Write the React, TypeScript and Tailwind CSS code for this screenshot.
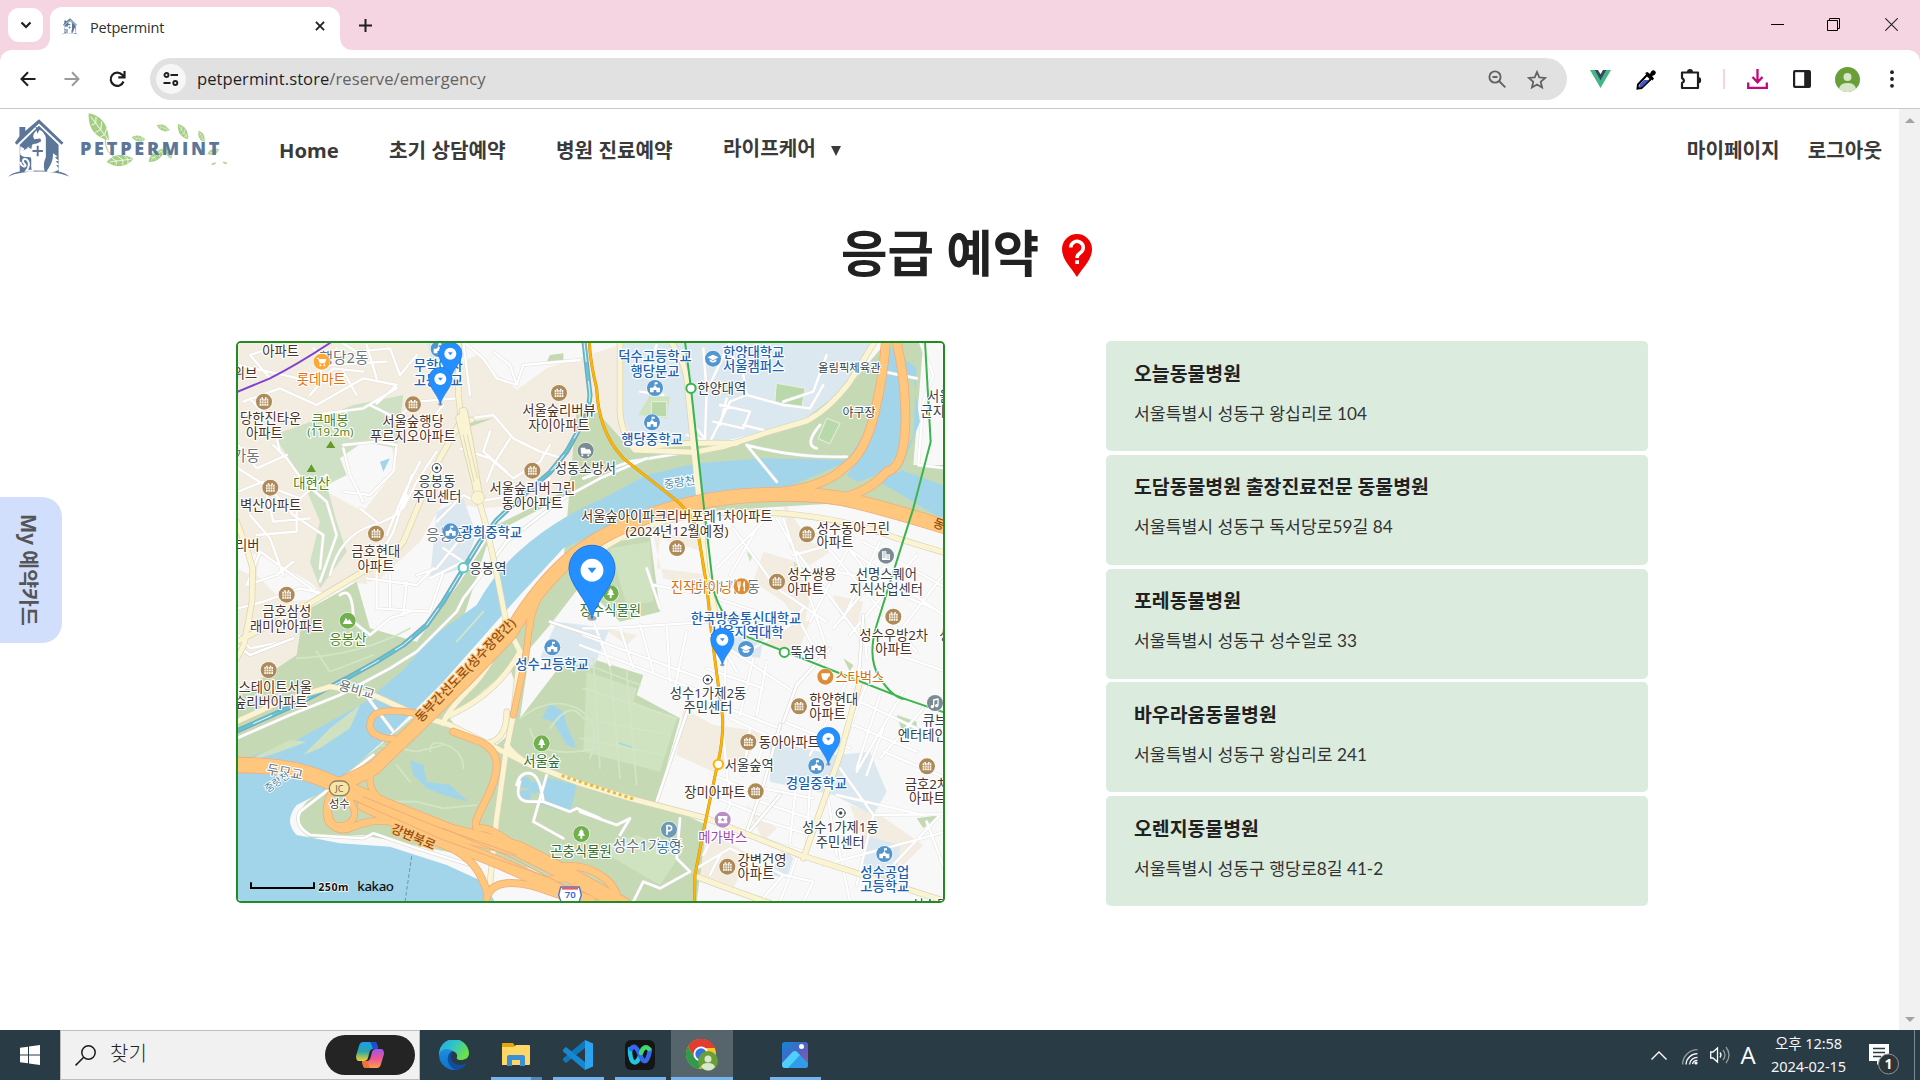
import React from "react";

const KR = "font-['Noto_Sans','Noto_Sans_CJK_KR',sans-serif]";
const LATO = "font-['Lato','Noto_Sans_CJK_KR',sans-serif]";
const UI = "font-['Open_Sans','Noto_Sans_CJK_KR',sans-serif]";

/* ---------- logos ---------- */

function House({ className }: { className: string }) {
  return (
    <svg className={className} viewBox="0 0 190 180" fill="none">
      <path d="M35 54V26h18v12L95 2l75 72-6 6L95 15 27 80l-6-6z" fill="#5b7699" />
      <path d="M95 22 155 80v82c12 2 22 6 33 16-42-20-142-22-188 0 10-9 22-14 36-16V80z" fill="#5b7699" />
      <path d="M38 84l8 6q10 2 18-4l14-8q12 0 22-8l-6 14q0 14-6 20H74q-20 4-28-8-8 6-10 20z" fill="#fff" opacity=".95" />
      <path d="M90 32c-4 8-12 12-13 22l3 9 18-2c6 6 4 10-3 14-10 2-16 8-22 18-10 8-22 8-30 2l-5 4v12c8 8 20 8 32 8 4 12-2 28 4 40l38 1c-4-16-2-30 4-42V58c-4-14-12-22-26-26z" fill="#fff" />
      <path d="M84 24l6 22 8-14zM45 78l5 18 10-6zM74 74l-2 18-9-3z" fill="#5b7699" />
      <path d="M60 96c4 16 20 14 22 32s-10 30-4 32H56c6-8 12-22 4-32-4-6-14-6-14 2s8 8 8 14-16 2-16-12" stroke="#fff" strokeWidth="6" />
      <path d="M118 162c10-16 20-28 20-56l14 10-8 2 12 12-10 0 12 12-10 0 8 12c-6 8-20 12-38 8z" fill="#fff" />
      <path d="M91 83v32M75 99h32" stroke="#5b7699" strokeWidth="6" />
    </svg>
  );
}

function Leaf({ t, s = 1 }: { t: string; s?: number }) {
  return (
    <g transform={`${t} scale(${s})`}>
      <path d="M0 0C26 8 42 26 40 66 12 60-6 36 0 0z" fill="#a5cf85" />
      <path d="M4 8 38 64M14 24l-10 4M14 24l2-14M24 40 10 46M24 40l4-18M32 52l-12 6M32 52l6-14" stroke="#fff" strokeWidth="2" fill="none" />
    </g>
  );
}

function BrandLeaves() {
  return (
    <svg className="absolute left-[82px] top-[2px] h-[60px] w-[150px]" viewBox="246 333 450 180">
      <Leaf t="translate(266 340) rotate(-6)" s={1.3} />
      <Leaf t="translate(320 486) rotate(-66)" s={1.05} />
      <Leaf t="translate(395 412) rotate(-50)" s={0.55} />
      <Leaf t="translate(470 376) rotate(-38)" s={0.55} />
      <Leaf t="translate(534 372) rotate(-3)" s={0.72} />
      <Leaf t="translate(596 392) rotate(4)" s={0.5} />
      <Leaf t="translate(446 486) rotate(-100)" s={0.8} />
      <Leaf t="translate(500 440) rotate(10)" s={0.5} />
      <Leaf t="translate(622 462) rotate(-80)" s={0.5} />
      <Leaf t="translate(634 494) rotate(-80)" s={0.2} />
      <Leaf t="translate(668 486) rotate(-40)" s={0.2} />
      <path d="M315 415q0 50 40 60M470 430q-8 10-8 26" stroke="#a5cf85" strokeWidth="3" fill="none" />
    </svg>
  );
}

/* ---------- browser chrome ---------- */

function TabStrip() {
  return (
    <div className="flex h-[50px] shrink-0 bg-[#f6d5e3]">
      <div className="ml-2 mt-2 flex h-[34px] w-[35px] items-center justify-center rounded-[11px] bg-white">
        <svg width="12" height="8" viewBox="0 0 12 8" fill="none" stroke="#1f1f1f" strokeWidth="2.2">
          <path d="M1.5 1.5 6 6l4.500-4.500" />
        </svg>
      </div>
      <div className="relative ml-[7px] mt-[7px] flex h-[43px] w-[290px] items-center rounded-t-[12px] bg-white pl-[11px]">
        <svg className="absolute -left-[14px] bottom-0" width="14" height="14" viewBox="0 0 14 14">
          <path d="M14 0v14H0Q14 14 14 0z" fill="#fff" />
        </svg>
        <svg className="absolute -right-[14px] bottom-0" width="14" height="14" viewBox="0 0 14 14">
          <path d="M0 0v14h14Q0 14 0 0z" fill="#fff" />
        </svg>
        <House className="mb-[5px] h-[17px] w-[18px]" />
        <span className={`ml-[11px] text-[14.500px] text-[#303030] ${UI} mt-[-2px] tracking-[-0.2px]`}>Petpermint</span>
        <svg className="ml-auto mb-[6px] mr-[15px]" width="10" height="10" viewBox="0 0 11 11" stroke="#1f1f1f" strokeWidth="2">
          <path d="M1 1l9 9M10 1l-9 9" />
        </svg>
      </div>
      <svg className="ml-[19px] mt-[19px]" width="13" height="13" viewBox="0 0 13 13" stroke="#1f1f1f" strokeWidth="2">
        <path d="M6.500 0v13M0 6.500h13" />
      </svg>
      <div className="ml-auto flex items-start pr-[22px] pt-[18px]">
        <svg width="13" height="13" viewBox="0 0 13 13" stroke="#000">
          <path d="M0 6.500h13" />
        </svg>
        <svg className="ml-[43px]" width="13" height="13" viewBox="0 0 13 13" stroke="#000" fill="none">
          <path d="M.5 2.500h10v10H.5zM2.500 2.500v-2h10v10h-2" />
        </svg>
        <svg className="ml-[45px]" width="13" height="13" viewBox="0 0 13 13" stroke="#222" strokeWidth="1.100">
          <path d="M.3.3l12.400 12.400M12.700.3L.3 12.700" />
        </svg>
      </div>
    </div>
  );
}

function Toolbar() {
  return (
    <div className="bg-[#f6d5e3]">
      <div className="flex h-[59px] items-center rounded-t-[12px] border-b border-[#c9c9c9] bg-white pl-5 pr-[26px]">
        <svg width="16" height="16" viewBox="0 0 16 16" fill="none" stroke="#1f1f1f" strokeWidth="2">
          <path d="M15.500 8H1.800M8 1.300 1.500 8 8 14.700" />
        </svg>
        <svg className="ml-[28px]" width="16" height="16" viewBox="0 0 16 16" fill="none" stroke="#9a9a9a" strokeWidth="2">
          <path d="M.5 8h13.700M8 1.300 14.500 8 8 14.700" />
        </svg>
        <svg className="ml-[29px]" width="17" height="17" viewBox="0 0 17 17" fill="none" stroke="#1f1f1f" strokeWidth="2.200">
          <path d="M14.500 10.500A6.600 6.600 0 1 1 13.200 3.800L15 5.800M15.500 0v6.300H9.300" />
        </svg>
        <div className="ml-[24px] flex h-[42px] w-[1417px] items-center rounded-full bg-[#e1e1e1] pl-[6px] pr-[20px]">
          <div className="flex size-[30px] items-center justify-center rounded-full bg-[#f6f6f6]">
            <svg width="16" height="14" viewBox="0 0 16 14" fill="none" stroke="#1f1f1f" strokeWidth="1.900">
              <circle cx="3.500" cy="3" r="2" />
              <path d="M7.500 3H15M.5 11h7" />
              <circle cx="12.300" cy="11" r="2" />
            </svg>
          </div>
          <span className={`ml-[11px] mt-px text-[16.600px] tracking-[0.05px] text-[#1f1f1f] ${UI}`}>
            petpermint.store<span className="text-[#636363]">/reserve/emergency</span>
          </span>
          <svg className="ml-auto" width="18" height="18" viewBox="0 0 18 18" fill="none" stroke="#636363" strokeWidth="1.900">
            <circle cx="7" cy="7" r="5.600" />
            <path d="M11 11l6.300 6.300M4.500 7h5" />
          </svg>
          <svg className="ml-[21px]" width="20" height="19" viewBox="0 0 20 19" fill="none" stroke="#636363" strokeWidth="1.800">
            <path d="M10 2l2.300 5.400 5.900.5-4.500 3.900 1.400 5.700L10 14.500l-5.100 3 1.400-5.700L1.800 7.900l5.900-.5z" />
          </svg>
        </div>
        <svg className="ml-[23px]" width="21" height="18" viewBox="0 0 21 18">
          <path d="M0 0h4.500l6 10 6-10H21L10.500 18z" fill="#41b883" />
          <path d="M4.500 0H8l2.500 4.300L13 0h3.500l-6 10.400z" fill="#34495e" />
        </svg>
        <svg className="ml-[25px]" width="20" height="21" viewBox="0 0 20 21">
          <path d="M1.500 19.500l.5-4L11 6l4 4-9.500 9z" fill="#fff" stroke="#000" strokeWidth="2" />
          <path d="M3 18l1-3 4-4h5l-7 7z" fill="#4257c9" />
          <path d="M9 4l2.500-1L14 5c1-3 3-5 5-3s0 4-3 5l2 2.500-1.500 2z" fill="#000" />
        </svg>
        <svg className="ml-[24px]" width="22" height="21" viewBox="0 0 22 21" fill="none">
          <path d="M2 3.500h16V19H2v-5q4-2 0-5z" stroke="#1f1f1f" strokeWidth="2.200" strokeLinejoin="round" />
          <path d="M7 3a3 3 0 0 1 6 0zM18 8a3.200 3.200 0 0 1 0 6.400z" fill="#1f1f1f" />
        </svg>
        <div className="ml-[21px] h-5 w-[2px] bg-[#f6d5e3]" />
        <svg className="ml-[22px]" width="21" height="20" viewBox="0 0 21 20" fill="none" stroke="#c2087c" strokeWidth="2.300">
          <path d="M10.500 0v13M5.500 8l5 5.300 5-5.300M1.200 13.500v5.300h18.600v-5.300" />
        </svg>
        <svg className="ml-[25px]" width="18" height="18" viewBox="0 0 18 18">
          <rect width="18" height="18" rx="2" fill="#1f2023" />
          <path d="M2.200 2.200h9v13.600h-9z" fill="#fff" />
        </svg>
        <svg className="ml-[24px]" width="25" height="25" viewBox="0 0 25 25">
          <circle cx="12.500" cy="12.500" r="12.500" fill="#689f38" />
          <circle cx="12.500" cy="10" r="4" fill="#d7e5c8" />
          <path d="M4 21.700Q5 16 12.500 16T21 21.700a12.500 12.500 0 0 1-17 0z" fill="#d7e5c8" />
        </svg>
        <svg className="ml-auto" width="4" height="18" viewBox="0 0 4 18" fill="#1f1f1f">
          <circle cx="2" cy="2.200" r="1.900" />
          <circle cx="2" cy="9" r="1.900" />
          <circle cx="2" cy="15.800" r="1.900" />
        </svg>
      </div>
    </div>
  );
}

/* ---------- map ---------- */

type Kind = "apt" | "school" | "univ" | "tree" | "mart" | "office" | "food" | "cafe" | "park" | "movie" | "fire" | "music" | "biz" | "mt";

const kindColor: Record<Kind, string> = {
  apt: "#ae8a58", school: "#5295d0", univ: "#5295d0", tree: "#72b04f", mart: "#ffa733", office: "#fff",
  food: "#dd8d36", cafe: "#dd8d36", park: "#6b99b6", movie: "#b98cc4", fire: "#7b8b94", music: "#7b8b94", biz: "#7b8b94", mt: "#72b04f",
};

function Poi({ k, x, y }: { k: Kind; x: number; y: number }) {
  if (k === "office")
    return (
      <g transform={`translate(${x} ${y})`} fill="#fff">
        <circle r="19" />
        <circle r="13.500" stroke="#37474f" strokeWidth="3" />
        <circle r="5" fill="#37474f" />
      </g>
    );
  return (
    <g transform={`translate(${x} ${y})`}>
      <circle r="26" fill="#fff" opacity=".7" />
      <circle r="24" fill={kindColor[k]} />
      {k === "apt" && (
        <g>
          <path d="M-13-9h5v-4h5v4h6v-4h5v4h5v21h-26z" fill="#fff" />
          <path d="M-7-8v20M0-8v20M7-8v20M-13-2h26M-13 5h26" stroke="#ae8a58" strokeWidth="2" />
        </g>
      )}
      {k === "school" && <path d="M-1-17h9v6H1v4l6 6h8v14H4V6h-8v7h-11V-1h8l6-6z" fill="#fff" />}
      {k === "univ" && <path d="M0-12 17-4 0 5-17-4zM-10 2v6Q0 15 10 8V2L0 7z" fill="#fff" />}
      {k === "tree" && <path d="M0-15 8-5H5l6 10H3v9h-6V5h-8l6-10h-3z" fill="#fff" />}
      {k === "mt" && <path d="M-15 10-5-9 1 1l4-6 10 15z" fill="#fff" />}
      {k === "mart" && (
        <g fill="#fff">
          <path d="M-15-12h6l2 4h21L10 5H-6l-5-14h-4z" />
          <circle cx="-4" cy="11" r="3" />
          <circle cx="8" cy="11" r="3" />
        </g>
      )}
      {k === "food" && <path d="M-11-13v10q3 5 3 16M-5-13v10q-3 5-3 16M8 13V-13q-5 8 0 15" stroke="#fff" strokeWidth="4" fill="none" />}
      {k === "cafe" && <path d="M-12-10H14v5q0 6-5 6-2 10-10 10-11 0-11-21z" fill="#fff" />}
      {k === "park" && <path d="M-6 14V-12H3a8 8 0 0 1 0 15H-6" stroke="#fff" strokeWidth="5" fill="none" />}
      {k === "movie" && <path d="M-14-11h28v7q-4 4 0 8v7h-28V4q4-4 0-8zM0-7l-2 5h-5l4 3-1 5 4-3 4 3-1-5 4-3H2z" fill="#fff" fillRule="evenodd" />}
      {k === "fire" && <path d="M-15-9h14v5h14v4h3v9h-30zM-10 11a3 3 0 1 0 .1 0M8 11a3 3 0 1 0 .1 0" fill="#fff" />}
      {k === "music" && <path d="M-4 9V-9l13-3V6" stroke="#fff" strokeWidth="4" fill="none" />}
      {k === "music" && <path d="M-8 6a5 5 0 1 0 .1 0M5 3a5 5 0 1 0 .1 0" fill="#fff" />}
      {k === "biz" && <path d="M-12 13v-26h13v9h11v17z" fill="#fff" />}
      {k === "biz" && <path d="M-9-8h7M-9-2h7M-9 4h7M3 1h6M3 7h6" stroke="#7b8b94" strokeWidth="2" />}
    </g>
  );
}

const pois: [Kind, number, number][] = [
  ["mart", 275, 80], ["apt", 102, 200], ["apt", 549, 208], ["apt", 987, 174], ["school", 626, 42], ["office", 620, 399],
  ["fire", 1067, 347], ["apt", 907, 407], ["apt", 121, 458], ["school", 662, 589], ["apt", 438, 596], ["apt", 170, 779], ["mt", 353, 857],
  ["univ", 1449, 71], ["school", 1275, 159], ["school", 1266, 262], ["apt", 1341, 639], ["apt", 1731, 598], ["apt", 1641, 740],
  ["biz", 1968, 662], ["food", 1535, 754], ["tree", 1142, 775], ["apt", 1990, 845], ["apt", 116, 1005], ["school", 967, 937],
  ["tree", 935, 1225], ["tree", 1054, 1497], ["univ", 1548, 942], ["office", 1433, 1034], ["cafe", 1786, 1025], ["apt", 1707, 1114],
  ["music", 2115, 1104], ["apt", 1555, 1221], ["school", 1759, 1293], ["apt", 2091, 1294], ["apt", 1577, 1369], ["movie", 1478, 1454],
  ["park", 1317, 1484], ["apt", 1492, 1595], ["office", 1832, 1434], ["school", 1963, 1557],
];

const B = "#4a332a", S = "#1b62b0", K = "#37414a", G = "#4b8420", D = "#6c757d";
// text, x centre, baseline y, colour, size, rotation
const labels: [string, number, number, string, number?, number?][] = [
  ["행당2동", 342, 85, D, 44], ["가동", 49, 378, D, 44], ["응봉동", 649, 614, D, 44], ["성수1가2동", 1254, 1547, D, 44], ["성수1가2동", 1484, 770, D, 44],
  ["아파트", 152, 64, B], ["위브", 45, 128, B], ["롯데마트", 274, 147, "#e8700c"], ["당한진타운", 122, 265, B], ["아파트", 103, 309, B],
  ["큰매봉", 300, 269, G], ["(119.2m)", 301, 304, G, 34], ["대현산", 245, 458, G], ["무학여자", 625, 105, S], ["고등학교", 625, 149, S],
  ["서울숲행당", 549, 273, B], ["푸르지오아파트", 549, 317, B], ["서울숲리버뷰", 987, 241, B], ["자이아파트", 987, 285, B],
  ["응봉동", 621, 454, K], ["주민센터", 621, 497, K], ["성동소방서", 1066, 413, K], ["서울숲리버그린", 907, 475, B], ["동아아파트", 907, 518, B],
  ["벽산아파트", 122, 524, B], ["광희중학교", 784, 605, S], ["리버", 52, 644, B], ["금호현대", 437, 664, B], ["아파트", 438, 708, B],
  ["응봉역", 774, 714, K], ["금호삼성", 170, 844, B], ["래미안아파트", 170, 889, B], ["응봉산", 354, 926, G],
  ["덕수고등학교", 1275, 79, S], ["행당분교", 1275, 123, S], ["한양대학교", 1571, 65, S], ["서울캠퍼스", 1571, 109, S], ["한양대역", 1475, 174, K],
  ["올림픽체육관", 1858, 111, K, 34], ["야구장", 1887, 245, K, 36], ["서울", 2128, 198, K], ["군지", 2108, 242, K], ["행당중학교", 1266, 328, S],
  ["중랑천", 1350, 454, "#4589aa", 34, -8], ["서울숲아이파크리버포레1차아파트", 1340, 558, B], ["(2024년12월예정)", 1341, 603, B],
  ["성수동아그린", 1870, 593, B], ["아파트", 1815, 637, B], ["성수쌍용", 1745, 733, B], ["아파트", 1727, 776, B],
  ["선명스퀘어", 1969, 733, K], ["지식산업센터", 1969, 777, K], ["진작다이닝", 1414, 770, "#d3700f"], ["장수식물원", 1141, 841, "#35763b"],
  ["한국방송통신대학교", 1548, 863, S], ["서울지역대학", 1550, 907, S], ["뚝섬역", 1736, 967, K], ["성수우방2차", 1991, 914, B], ["아파트", 1991, 957, B],
  ["성", 2146, 914, K], ["스타벅스", 1889, 1041, "#d3700f"], ["성수고등학교", 966, 1002, S], ["스테이트서울", 136, 1071, B], ["숲리버아파트", 122, 1116, B],
  ["용비교", 376, 1078, D, 40, 16], ["두모교", 162, 1325, D, 40, 10], ["성수", 328, 1418, B, 34],
  ["동부간선도로(성수장암간)", 716, 1015, "#944f12", 38.500, -46], ["강변북로", 545, 1518, "#944f12", 38, 23], ["동", 2123, 580, "#944f12", 38, 20],
  ["서울숲", 935, 1294, "#356d2d"], ["곤충식물원", 1053, 1564, "#356d2d"], ["공영", 1317, 1550, "#2f7293"],
  ["성수1가제2동", 1434, 1088, K], ["주민센터", 1434, 1132, K], ["한양현대", 1811, 1107, B], ["아파트", 1793, 1151, B], ["큐브", 2114, 1170, K], ["엔터테인", 2077, 1216, K],
  ["동아아파트", 1678, 1235, B], ["서울숲역", 1558, 1305, K], ["경일중학교", 1759, 1360, S], ["금호2차", 2091, 1362, B], ["아파트", 2092, 1404, B],
  ["장미아파트", 1455, 1385, B], ["메가박스", 1478, 1521, "#9b4bac"], ["성수1가제1동", 1831, 1490, K], ["주민센터", 1831, 1536, K],
  ["강변건영", 1596, 1590, B], ["아파트", 1578, 1633, B], ["성수공업", 1964, 1625, S], ["고등학교", 1964, 1668, S], ["성수동", 2100, 1724, K],
];

const yellowRoads = [
  "M20 560 50 640 68 700 66 800 42 930 20 970",
  "M685 0V180L700 300 735 440 745 490 765 560 795 690 830 870 870 950 850 1140 828 1250 800 1450 775 1690",
  "M700 245 630 370 570 500 520 620 480 670 390 715 290 775 200 830 20 920",
  "M20 1160 150 1100 300 1055 430 1080 560 1140 660 1170 800 1240 880 1280 1050 1345 1200 1390 1430 1450 1710 1560 1930 1630 2150 1700",
  "M1170 0V230Q1175 300 1215 345L1390 352 1480 335 1620 290 1730 258Q1800 220 1860 140L1940 10",
  "M1215 340Q1350 320 1520 325",
  "M1310 0Q1365 80 1370 130L1390 330 1410 520 1425 700 1460 850",
  "M1060 690Q1150 600 1300 560T1650 535Q1850 550 2000 610L2150 655",
  "M1890 1040 1830 1260 1770 1430 1720 1570",
  "M1400 1625 1480 1655 1620 1705",
  "M830 870Q790 990 720 1060T640 1165",
  "M870 950Q800 1080 650 1145",
  "M690 230Q710 260 725 255M750 1225Q830 1230 830 1130M830 1230Q850 1260 900 1290",
];

const orangeRoads: [string, number][] = [
  ["M900 850Q890 960 880 1000L850 1140", 16],
  ["M560 1135Q440 1115 425 1150T440 1200T490 1210", 17],
  ["M435 1290Q410 1320 425 1360T520 1430L700 1490", 17],
  ["M670 1190 750 1220Q800 1245 800 1290T760 1410T750 1480T850 1530", 19],
  ["M300 1380Q280 1440 300 1465Q330 1495 370 1475Q430 1450 480 1460L640 1530Q720 1560 750 1620T770 1690Q780 1650 830 1645T960 1670L1050 1700", 19],
  ["M350 1380Q400 1450 345 1470T295 1400", 17],
  ["M960 1600Q1050 1580 1110 1620T1160 1710", 20],
  ["M940 1640Q1060 1600 1130 1710", 20],
  ["M950 740Q900 830 900 880", 16],
  ["M1968 0Q1965 100 1935 230T1840 400Q1790 450 1660 470", 24],
  ["M1995 0Q2030 140 2026 270T1970 410Q1920 470 1830 490", 24],
  ["M20 1290Q170 1290 260 1325T460 1410L660 1490 860 1540 1000 1610 1180 1710", 44],
  ["M400 1410 600 1500 800 1580 980 1660 1080 1700", 34],
  ["M2160 580Q2000 530 1880 500T1580 480T1250 545T1010 680T840 895L700 1040 560 1175 430 1300 330 1350", 40],
];

const streetsLeft =
  "M24 90 250 140 320 40M40 200 150 160 260 210 400 130 500 150 440 205M120 130 60 60 150 30M60 190 130 270 150 350M170 360 80 400 24 330M330 20 380 50 480 40 510 120 560 60M250 40 300 90 470 80M240 180 310 100 400 110M410 30 440 130M340 110 380 180M500 160 400 220 250 240M420 210 500 250 560 200 680 190M720 180 700 20 760 70 800 130 860 150 840 90 790 50M860 150 880 90 1050 75M720 250 790 240 850 310 930 350 1000 370M780 290 760 350 830 410M840 310 790 390 770 440M690 340 780 370 850 430 930 380 960 330M560 300 590 270 640 210M520 520 560 440 620 350M470 600 520 480 570 380M440 680 490 590 545 420M300 720Q330 600 430 570T530 480M620 560 700 480 740 500 860 480 960 430M600 730 700 680 640 640M24 400 120 460 190 540 280 600 270 700M130 330 170 370 220 440 290 500 320 600 270 740M24 470 100 440 130 560 240 550M50 620 160 700 270 780M90 650 50 750 140 720 190 680M130 460 210 490 290 420M200 500V590L80 600M60 540 120 610 160 720M24 820 100 800 210 760 300 780M340 330 440 320 500 330 490 410 420 480 340 470M340 340 360 420 400 500M440 560 390 520M410 730 560 750 610 700M440 710 440 820 600 830 640 710M480 720 480 820M530 740 520 840M330 780Q370 750 370 860L420 900 480 850 540 830M24 900 60 940 160 920M700 600 620 700 560 720";
const streetsRight =
  "M1420 40 1430 170 1500 20M1430 170 1425 310 1380 260M1370 300 1440 320 1500 200 1550 180 1540 120M1470 210 1560 230 1540 280 1450 260M1490 190 1470 270M1550 180 1660 210 1740 220 1780 150M1540 270 1600 285M1660 200 1750 170 1790 60M1300 180 1230 170M1280 30 1250 110M1550 330 1640 440M1550 330Q1700 370 1850 365M1960 110 2060 130M2070 20 2110 120 2080 200 2065 390 2150 400M1770 270Q1720 330 1760 340M1060 430 1200 380 1500 330M1060 880 1130 880 1450 860M1250 700 1290 820M1270 750 1430 780 1700 870M1460 700 1620 540M1510 580 1640 760 1790 860M1680 620 1640 550M1660 550 1790 940M1690 660 1840 620 1970 790M1870 610 1740 860M1950 620 1840 850M2000 650 1810 880M2060 660 1860 900M2140 720 2000 900M1700 650 1900 920M1760 600 2060 950M1810 610 2140 840M1900 620 2150 760M1580 580 1500 720M1760 700 1870 720 2110 820M1060 900 1440 1040M1090 860 1140 990M1170 880 1210 1000M1230 870 1270 1010M1310 870 1320 1040M1370 890 1330 1080M1050 930 1440 1080M1440 870 1520 1010M1480 930 1690 1070M1540 960 1680 870 1720 820M1430 1000 1600 1060M1440 1100 1650 1180M1490 910 1480 1150M1570 970 1530 1140M1610 980 1580 1140M1710 860 1780 990M1870 1000 1740 1260M1920 1020 1840 1230M1950 1080 1880 1300M2020 1070 1880 1310M2080 1120 1950 1270M1890 920 2150 1010M1890 1100 2060 1180M1870 1170 2060 1250M1660 1160 1860 1240M1910 970 1900 850M1480 1200 1500 1410 1420 1560M1500 1150 1610 1200 1570 1320M1450 1320 1610 1390M1440 1380 1590 1440M1560 1180 1540 1320M1700 1330 1680 1520M1740 1340 1730 1540M1790 1360 1820 1560M1820 1380 2080 1440M1600 1360 1750 1390M1590 1400 1740 1450M1580 1450 1740 1500M1560 1500 1720 1550M1830 1300 1930 1440 2150 1438M1930 1440 1880 1650M2130 1440 1980 1600M2090 1460 2150 1620M1780 1590 2150 1490M1820 1510 1860 1700M1400 1600 1500 1540 1660 1620 1590 1700M1660 1620 1750 1640 1720 1700M1700 1570 1650 1700M1470 1560 1440 1620M1960 1250 2150 1330M1960 1180 1910 1320";

const whiteRoads =
  "M20 1210 180 1140 330 1080 480 1000 560 950 680 830 700 790 830 620 1000 490 1110 430 1250 370M415 1090 490 1190M430 1260 300 1360 210 1430Q190 1470 240 1500L400 1510 430 1495 560 1540 720 1590M1375 1120 1280 1400M1650 1380 1550 1500M1900 840 1885 1040M1660 1160 1700 1050 1800 940M1650 1170 1600 1350 1550 1490M860 1350Q870 1310 900 1315T940 1400L900 1400Q850 1400 870 1340M950 1320 910 1460 1000 1510M940 1400 1020 1430 1040 1420 1110 1450M1050 1430 1160 1470 1200 1450 1170 1500M1350 1450 1340 1570 1380 1610 1290 1660 1240 1640 1210 1700M20 930 60 960 190 910M960 860 1110 910";

const minor = "M450 1230 560 1250 640 1230M480 1400 560 1400 640 1420 740 1410M600 1250Q600 1210 650 1230T700 1300M500 1290 540 1340M870 1150Q960 1080 1040 1120T1080 1270M900 1180Q920 1280 1100 1240M1060 1150Q1020 1090 960 1180M200 970Q400 960 540 880M680 920 760 830M960 740Q920 770 930 800M260 950 300 1010 430 960M1050 980 1230 1050M1090 970 1110 1300M1140 990 1170 1330M1190 1010 1220 1350M1060 1150 1320 1200M1050 1210 1300 1260M1060 1060 1340 1150M1160 1520 1350 1560";

const rail = "M1062 20 1080 180Q1078 220 1060 260L1010 350 960 412 880 480 800 555 750 620 695 710 640 800 590 870 520 930 440 980 350 1030 200 1108 20 1188";

const markers: [number, number, number][] = [[661, 132, 1], [631, 208, 1], [1477, 990, 1], [1795, 1288, 1], [1086, 850, 1.900]];

function MapView() {
  return (
    <svg className="block h-full w-full" viewBox="24 24 2115 1674" preserveAspectRatio="none" fill="none" strokeLinejoin="round" strokeLinecap="round">
      <path d="M0 0H2200V1750H0z" fill="#f8f8f8" />
      {/* residential blocks */}
      <path d="M20 20H600L700 80 740 60 860 165 950 100 1200 20V330L1100 340 960 500 760 520 640 500 570 620 430 750 350 740 240 820 200 1010 20 1060z" fill="#f3ece1" />
      <path d="M720 20H1040V75L960 80 880 150 790 120zM340 330 480 320 500 400 400 530 290 470zM410 740 600 720 620 840 440 850zM90 660 240 740 290 790 160 800 80 720zM20 640 80 660 60 720 20 700z" fill="#f8f8f8" />
      <path d="M1290 610 1420 650 1440 720 1280 700zM1270 600 1300 730 1420 760 1410 600zM1660 500 1740 620 1800 650 1740 690 1680 640zM1600 650 1700 680 1740 790 1720 880 1660 800 1570 740zM1360 1120 1450 1170 1600 1190 1540 1290 1450 1310 1340 1260zM1410 1470 1560 1560 1510 1660 1400 1620zM1860 1410 1950 1440 2080 1530 2020 1590 1900 1520zM1810 780 1900 800 1880 880 1830 840zM1550 1410 1640 1480 1600 1520zM1590 840 1740 860 1700 960 1560 920zM1120 880 1220 900 1190 930z" fill="#f3ece1" />
      {/* campuses */}
      <path d="M1160 20H1930L1830 170Q1750 260 1600 290L1390 340 1220 320 1170 240zM590 20H700L690 150 630 160zM620 530 700 490 740 600 700 700 600 730zM1620 1220 1820 1260 1920 1250 1970 1370 1930 1440 1810 1380 1620 1340zM1900 1500 2010 1530 2000 1650 1900 1640zM1660 1540 1690 1570 1670 1630 1620 1620zM1480 900 1600 910 1590 970 1500 950z" fill="#dce8f0" />
      {/* green areas */}
      <path d="M130 300Q250 260 370 210L520 180 500 340 400 320 330 370 350 420 290 450 320 560 350 650 270 760 240 680 270 560 210 420z" fill="#cfe1c4" />
      <path d="M380 740 330 770 220 830 200 960 20 1080V1280H280L480 1190 700 850 780 600 1110 430 1200 390 1110 330 980 480 800 570 690 740 560 920 420 880z" fill="#c5dab4" />
      <path d="M1040 220 1100 230 1200 340 1500 330 1700 270 1860 150 1970 20H2080L2050 390H2150V580L1900 500 1240 540 1050 640 980 700 1120 640 1060 740 960 870 900 940 870 1150 1000 980 1050 960 1240 1020 1220 1080 1350 1150 1280 1400 1430 1470 1400 1700H1100L900 1600 400 1500 240 1510Q180 1460 230 1400L440 1240 720 1000 1000 680z" fill="#c5dab4" />
      <path d="M1070 640 1260 600 1290 830 1170 860 1080 770zM720 260 790 250 720 275zM2000 1140 2060 1160 2060 1200 2020 1200zM960 60 1000 55V80H950zM1840 970 1870 990 1860 1010zM2060 1450 2130 1440 2080 1480z" fill="#c5dab4" />
      <path d="M1140 640 1260 620 1270 800 1190 810zM1260 180 1320 185 1310 250 1225 240zM1070 1010 1220 1060 1210 1100 1340 1150 1290 1310 1060 1250zM1100 1540 1220 1500 1350 1560 1290 1650zM1690 680 1720 700 1700 715zM1550 650 1570 660 1560 680z" fill="#cfe3c1" />
      <path d="M1265 200h45v45h-45zM1640 145 1725 160 1715 220 1635 205zM1765 310 1790 250 1830 265 1800 325z" stroke="#e6f1df" strokeWidth="3" fill="#b9d9aa" />
      <path d="M660 1150 840 1000 860 1060 835 1200 800 1230 680 1180z" fill="#f8f8f8" />
      <path d="M980 860 1140 880 1090 1000 930 970z" fill="#dce8f0" />
      {/* water */}
      <path d="M1120 490Q1000 540 900 620T740 810L600 910 520 1005 400 1105 200 1215 20 1280V1710H800L760 1640 650 1590 480 1535 330 1525 200 1500Q160 1460 200 1410L300 1360 480 1200 640 1040 870 780 1000 640 1110 590 1250 530 1400 490 1690 450 1850 380 1930 250 1980 130H2050L2070 260 2010 410 1930 430 2150 560V455L2000 400 2050 300 2060 100 1960 20 1930 300 1850 375 1600 370 1400 385 1250 420z" fill="#a3d5ea" />
      <path d="M1970 100H2020L2020 320Q1980 420 1880 440L1850 420Q1930 330 1970 100z" fill="#a3d5ea" />
      <path d="M24 1290 180 1215 230 1220 150 1250zM220 1260 300 1180 390 1110 360 1180 270 1240z" fill="#cfe1c0" />
      <path d="M540 1275 580 1290 590 1340 660 1350 715 1400 640 1380 590 1360 550 1320zM960 1105 1000 1130 1010 1170 1040 1240 1010 1230 970 1160 935 1150zM940 1325 1040 1350 1020 1435 920 1405zM885 1325a18 18 0 1 0 1 0M912 1340a18 18 0 1 0 1 0M885 1365a18 18 0 1 0 1 0M1090 670 1120 690 1110 750 1090 740zM450 380 480 370 460 410z" fill="#a3d5ea" />
      <path d="M545 1565 525 1700" stroke="#6d94ad" strokeWidth="3" strokeDasharray="9 9" />
      <path d="M1168 1225 1210 1239" stroke="#a3d5ea" strokeWidth="5" />
      {/* small streets */}
      <path d={minor} stroke="#d3e5c6" strokeWidth="5" />
      <path d={streetsRight} stroke="#e4e4e6" strokeWidth="10" />
      <path d={streetsRight} stroke="#fff" strokeWidth="7" />
      <path d={streetsLeft} stroke="#e5e0da" strokeWidth="10" />
      <path d={streetsLeft} stroke="#fff" strokeWidth="7" />
      <path d={whiteRoads} stroke="#d3d6cc" strokeWidth="11" />
      <path d={whiteRoads} stroke="#fff" strokeWidth="8" />
      {/* railway */}
      <path d={rail} stroke="#7fa3c0" strokeWidth="15" />
      <path d={rail} stroke="#5cc8d0" strokeWidth="8" />
      <path d={rail} stroke="#e8fafa" strokeWidth="3" strokeDasharray="60 60" />
      {/* main roads */}
      {yellowRoads.map((d) => <path key={d} d={d} stroke="#d9d2b4" strokeWidth="19" />)}
      {yellowRoads.map((d) => <path key={d} d={d} stroke="#faf4d3" strokeWidth="15" />)}
      <path d="M690 250 740 450M700 230 745 480" stroke="#d9d2b4" strokeWidth="28" />
      <path d="M690 250 740 450M700 230 745 480" stroke="#faf4d3" strokeWidth="23" />
      <path d="M700 300 732 440M712 300 742 430" stroke="#d9d2b4" strokeWidth="2.500" />
      <circle cx="744" cy="488" r="20" fill="#faf4d3" stroke="#d9d2b4" strokeWidth="2" />
      <path d="M995 1322 1210 1392" stroke="#e9b938" strokeWidth="9" strokeDasharray="9 9" strokeLinecap="butt" />
      {orangeRoads.map(([d, w]) => <path key={d} d={d} stroke="#efad7c" strokeWidth={w + 5} />)}
      {orangeRoads.map(([d, w]) => <path key={d} d={d} stroke="#ffc77d" strokeWidth={w} />)}
      <path d="M370 1395 640 1515 950 1625M640 1480 850 1570 1000 1650M400 1385 620 1475 860 1560" stroke="#efad7c" strokeWidth="3" />
      {/* metro lines */}
      <path d="M300 24Q200 90 120 130L24 170" stroke="#8043cf" strokeWidth="6" />
      <path d="M1078 20Q1080 80 1100 160Q1105 290 1180 370L1325 485Q1395 540 1405 600L1430 750 1445 900 1478 1150Q1480 1220 1462 1290L1420 1490 1395 1620 1393 1710" stroke="#b88d33" strokeWidth="9" />
      <path d="M1078 20Q1080 80 1100 160Q1105 290 1180 370L1325 485Q1395 540 1405 600L1430 750 1445 900 1478 1150Q1480 1220 1462 1290L1420 1490 1395 1620 1393 1710" stroke="#ffb400" strokeWidth="7" />
      <path d="M1365 20 1383 160 1420 500 1450 760Q1470 850 1550 905L1665 950 1880 1035 2020 1090 2150 1135M2085 20 2102 320 2050 520 1940 870Q1910 970 1950 1030T2025 1092" stroke="#3bb44f" strokeWidth="6" />
      {[[1383, 160, "#3bb44f"], [1663, 952, "#3bb44f"], [1465, 1288, "#ffb400"], [700, 698, "#5cc8c8"]].map(([x, y, c]) => (
        <circle key={`${x}`} cx={x} cy={y} r="14" fill="#fff" stroke={c as string} strokeWidth="6" />
      ))}
      <path d="M302 317 316 339H288zM244 388 258 411H230z" fill="#649a2a" />
      {/* labels */}
      <g className={KR} fontWeight="400">
        {labels.slice(0, 5).map(([t, x, y, c, s], i) => (
          <text key={i} x={x} y={y} textAnchor="middle" fontSize={s} fill={c} stroke="#fff" strokeWidth="7" paintOrder="stroke">{t}</text>
        ))}
        {pois.map(([k, x, y], i) => <Poi key={i} k={k} x={x} y={y} />)}
        {labels.slice(5).map(([t, x, y, c, s, r], i) => (
          <text key={i} transform={`translate(${x} ${y}) rotate(${r ?? 0})`} textAnchor="middle" fontSize={s ?? 40} fill={c} stroke={c === "#944f12" ? "#ffc77d" : "#fff"} strokeWidth="7" paintOrder="stroke" fontWeight={c === "#944f12" || c === S ? 500 : 400}>{t}</text>
        ))}
        <text x="140" y="1352" transform="rotate(-35 140 1340)" fontSize="30" fill="#3f86a5" stroke="#fff" strokeWidth="5" paintOrder="stroke" textAnchor="middle">중랑천</text>
      </g>
      <rect x="298" y="1338" width="60" height="44" rx="22" fill="#f9e6a4" stroke="#8b8266" strokeWidth="4" />
      <text x="328" y="1370" textAnchor="middle" fontSize="27" fill="#6b654f" className={KR}>JC</text>
      <path d="M992 1656H1048L1054 1680 1044 1710H996L986 1680z" fill="#fff" stroke="#4d74cd" strokeWidth="4" />
      <path d="M996 1656h48v8h-48z" fill="#d8636b" />
      <text x="1021" y="1690" textAnchor="middle" fontSize="29" fontWeight="600" fill="#4366d2" className={KR}>70</text>
      {/* markers */}
      {markers.map(([x, y, s], i) => (
        <g key={i} transform={`translate(${x} ${y}) scale(${s})`}>
          <ellipse rx="7" ry="4" fill="#777" opacity=".6" />
          <path d="M0 0C-7-30-35-50-35-76A35 35 0 0 1 35-76C35-50 7-30 0 0z" fill="#258fff" stroke="#1b77dd" strokeWidth="1.500" transform={s > 1 ? "scale(1.04 1.04)" : undefined} />
          <circle cy="-76" r="18" fill="#fff" />
          <path d="M-7-80H7L0-71z" fill="#258fff" />
        </g>
      ))}
      {/* scale */}
      <path d="M63 1642v17h189v-17" stroke="#000" strokeWidth="6" strokeLinecap="butt" strokeLinejoin="miter" />
      <text x="265" y="1668" fontSize="32" fontWeight="700" fill="#111" stroke="#fff" strokeWidth="4" paintOrder="stroke" textLength="90" className={KR}>250m</text>
      <text x="382" y="1667" fontSize="40" fontWeight="500" fill="#111" textLength="110" className={KR}>kakao</text>
    </svg>
  );
}

/* ---------- page ---------- */

const hospitals = [
  ["오늘동물병원", "서울특별시 성동구 왕십리로 104"],
  ["도담동물병원 출장진료전문 동물병원", "서울특별시 성동구 독서당로59길 84"],
  ["포레동물병원", "서울특별시 성동구 성수일로 33"],
  ["바우라움동물병원", "서울특별시 성동구 왕십리로 241"],
  ["오렌지동물병원", "서울특별시 성동구 행당로8길 41-2"],
];

function Page() {
  return (
    <div className="flex h-[921px]">
      <div className="relative flex-1">
        <header className={`flex h-[80px] items-start text-[20.200px] font-bold leading-[28px] text-[#3a3a3a] ${KR}`}>
          <div className="relative flex h-full w-[279px]">
            <House className="ml-2 mt-[9px] h-[60px] w-[62px]" />
            <BrandLeaves />
            <span className="relative ml-[10px] mt-[25px] font-['Open_Sans',sans-serif] text-[18px] font-extrabold tracking-[2.750px] text-[#5b7699]">PETPERMINT</span>
          </div>
          <nav className="flex pt-[27px]">
            <a className="w-[110px]">Home</a>
            <a className="w-[167px]">초기 상담예약</a>
            <a className="w-[167px]">병원 진료예약</a>
            <a className="-mt-[2px] flex items-center self-start">
              라이프케어
              <svg className="ml-[15px] mt-[6px]" width="10" height="10" viewBox="0 0 10 10"><path d="M0 0h10L5 10z" fill="#3a3a3a" /></svg>
            </a>
          </nav>
          <div className="ml-auto flex gap-[28px] pr-[17px] pt-[27px]">
            <a>마이페이지</a>
            <a>로그아웃</a>
          </div>
        </header>
        <h1 className={`ml-[841px] mt-[26px] flex h-[76px] items-center text-[50.500px] font-bold text-[#212121] ${LATO}`}>
          <span>응급 예약</span>
          <svg className="ml-[23px] mt-[5px]" width="30" height="43" viewBox="0 0 30 43">
            <path d="M15 0a15 15 0 0 1 15 15c0 11-9 18-15 28C9 33 0 26 0 15A15 15 0 0 1 15 0z" fill="#ee0202" />
            <path d="M8.800 13.500a6.200 6.200 0 1 1 9.600 5.200c-2.300 1.600-3.400 2.700-3.400 5.300" fill="none" stroke="#fff" strokeWidth="3.600" />
            <path d="M13.200 26.300h3.800V30h-3.800z" fill="#fff" />
          </svg>
        </h1>
        <main className="ml-[236px] mt-[50px] flex items-start">
          <section className="h-[562px] w-[709px] overflow-hidden rounded-[5px] border-2 border-[#228b22]">
            <MapView />
          </section>
          <ul className="ml-[161px] flex w-[542px] flex-col gap-[3.800px]">
            {hospitals.map(([name, addr]) => (
              <li key={name} className={`h-[110px] rounded-[5px] bg-[#dbecde] px-[28px] pt-[18.500px] ${LATO}`}>
                <div className="text-[19.400px] font-bold leading-[28px] text-[#212121]">{name}</div>
                <div className="mt-[13px] text-[17.200px] leading-[26px] text-[#333]">{addr}</div>
              </li>
            ))}
          </ul>
        </main>
        <button className="absolute left-0 top-[388px] flex h-[146px] w-[62px] items-center justify-center rounded-r-[20px] bg-[#d2dffc] pr-[4px]">
          <span className={`text-[20.500px] font-bold leading-none text-[#555] [writing-mode:vertical-rl] [text-orientation:sideways] ${KR}`}>My 예약카드</span>
        </button>
      </div>
      <div className="flex w-[21px] flex-col items-center justify-between bg-[#f1f1f1] pb-[8px] pt-[9px]">
        <svg width="10" height="5" viewBox="0 0 10 5"><path d="M0 5h10L5 0z" fill="#a3a3a3" /></svg>
        <svg width="10" height="5" viewBox="0 0 10 5"><path d="M0 0h10L5 5z" fill="#a3a3a3" /></svg>
      </div>
    </div>
  );
}

/* ---------- taskbar ---------- */

function TaskApp({ children, bar, wide }: { children: React.ReactNode; bar?: boolean; wide?: boolean }) {
  return (
    <div className={`flex h-full w-[62px] flex-col items-center ${wide ? "bg-[#56646b]" : ""}`}>
      <div className="flex h-[47px] w-full items-center justify-center pt-[3px]">{children}</div>
      {bar && <div className={`h-[3px] bg-[#76b4ef] ${wide ? "w-full" : "w-[51px]"}`} />}
    </div>
  );
}

function Taskbar() {
  return (
    <div className="flex h-[50px] items-stretch bg-[#293b45]">
      <div className="flex w-[60px] items-center justify-center">
        <svg width="20" height="20" viewBox="0 0 20 20" fill="#fff">
          <path d="M0 2.800 8 1.700v7.800H0zM9 1.500 20 0v9.500H9zM0 10.500h8v7.800l-8-1.100zM9 10.500h11V20L9 18.500z" />
        </svg>
      </div>
      <div className="flex w-[360px] items-center border border-[#bdbdbd] bg-[#f1f1f1] pl-[14px] pr-1">
        <svg width="21" height="21" viewBox="0 0 21 21" fill="none" stroke="#1b1b1b" strokeWidth="1.500">
          <circle cx="13.500" cy="7.500" r="6.700" />
          <path d="M8.700 12.300.6 20.400" />
        </svg>
        <span className={`ml-[14px] -mt-[3px] text-[20px] font-light text-[#222] ${KR}`}>찾기</span>
        <div className="ml-auto flex h-10 w-[90px] items-center justify-center rounded-full bg-[#242424]">
          <svg width="28" height="26" viewBox="0 0 28 26">
            <defs>
              <linearGradient id="ca" x1="0" y1="0" x2="0" y2="1"><stop stopColor="#1d9cf0" /><stop offset=".5" stopColor="#2aa6a8" /><stop offset="1" stopColor="#f5d02c" /></linearGradient>
              <linearGradient id="cb" x1="0" y1="0" x2="0" y2="1"><stop stopColor="#9c55f0" /><stop offset=".5" stopColor="#ee5594" /><stop offset="1" stopColor="#fba14c" /></linearGradient>
            </defs>
            <path d="M7 0h12q2 0 3 7h-5q-3 0-4 5l-1 4q-1 3-4 3H3q-3 0-3-5L3 4q1-4 4-4z" fill="url(#ca)" />
            <path d="M14 0h5q2 0 3 7h-5q-2-6-3-7z" fill="#1c4fcf" />
            <path d="M21 26H9q-2 0-3-7h5q3 0 4-5l1-4q1-3 4-3h5q3 0 3 5l-3 10q-1 4-4 4z" fill="url(#cb)" />
            <path d="M6 19h5l3 7H9q-2 0-3-7z" fill="#f2713a" />
          </svg>
        </div>
      </div>
      <div className="ml-[3px] flex">
        <TaskApp>
          <svg width="30" height="30" viewBox="0 0 30 30">
            <defs>
              <linearGradient id="ea" x1="0" y1="0" x2="1" y2=".5"><stop stopColor="#27a5e8" /><stop offset=".5" stopColor="#2fc4c8" /><stop offset="1" stopColor="#6be04a" /></linearGradient>
              <linearGradient id="eb" x1="0" y1="0" x2="0" y2="1"><stop stopColor="#1f8fe0" /><stop offset="1" stopColor="#0f6fd0" /></linearGradient>
            </defs>
            <path d="M0 15A15 15 0 0 1 30 13c0 5-4 7-8 7-3 0-5-1-4-3 1-3-2-6-6-6C6 11 1 14 0 15z" fill="url(#ea)" />
            <path d="M0 15C1 9 9 7 14 11c-4 1-5 7-2 11s9 5 15 2A15 15 0 0 1 0 15z" fill="url(#eb)" />
            <path d="M14 11c-7 2-8 14 3 19 4 0 8-3 10-6-8 2-14 0-15-6 0-3 0-5 2-7z" fill="#104e9c" />
          </svg>
        </TaskApp>
        <div className="flex w-[62px] flex-col items-center">
          <div className="flex h-[47px] items-center pt-[3px]">
            <svg width="28" height="24" viewBox="0 0 28 24">
              <path d="M0 1q0-1 1-1h10l2 3v5H0z" fill="#e5a412" />
              <path d="M0 4h12l2-2h13q1 0 1 1v18q0 1-1 1H0z" fill="#ffd766" />
              <path d="M5 23V14q0-2 2-2h14q2 0 2 2v9h-5v-6H10v6z" fill="#3b90d3" />
            </svg>
          </div>
          <div className="flex">
            <div className="h-[3px] w-[40px] bg-[#76b4ef]" />
            <div className="h-[3px] w-[11px] bg-[#5688b5]" />
          </div>
        </div>
        <TaskApp bar>
          <svg width="30" height="30" viewBox="0 0 30 30">
            <path d="M22 8 3 23 0 20.500v-2L22 0z" fill="#0f78bd" />
            <path d="M22 22 3 7 0 9.500v2L22 30z" fill="#1688cf" />
            <path d="M22 0l8 3.500v23L22 30z" fill="#2aa4f1" />
          </svg>
        </TaskApp>
        <TaskApp bar>
          <svg width="30" height="30" viewBox="0 0 30 30" fill="none" strokeWidth="4.500" strokeLinecap="round">
            <rect width="30" height="30" rx="6" fill="#151515" />
            <path d="M5 9C5 26 12 25 15 16" stroke="#1ec6df" />
            <path d="M6 9C9 4 12 8 15 15S22 26 25 10" stroke="#3468f0" />
            <path d="M16 13C18 7 21 6 24 9" stroke="#3fd774" />
          </svg>
        </TaskApp>
        <TaskApp bar wide>
          <svg className="-ml-px" width="34" height="34" viewBox="0 0 34 34">
            <circle cx="16" cy="16" r="15" fill="#fbc72b" />
            <path d="M3 8.500A15 15 0 0 1 30 10H16L9.500 20z" fill="#e23c30" />
            <path d="M3 8.500 9.500 20 17 23l-3 8A15 15 0 0 1 3 8.500z" fill="#2f9a4c" />
            <circle cx="16" cy="16" r="7.500" fill="#fff" />
            <circle cx="16" cy="16" r="5.700" fill="#2e74e6" />
            <circle cx="23" cy="23" r="10" fill="#689f38" />
            <circle cx="23" cy="21" r="3.500" fill="#dbe7cd" />
            <path d="M16 29q1-4 7-4t7 4q-6 7-14 0z" fill="#dbe7cd" />
          </svg>
        </TaskApp>
        <div className="w-[31px]" />
        <TaskApp bar>
          <svg width="26" height="26" viewBox="0 0 26 26">
            <defs><linearGradient id="ph" x1="0" y1="0" x2="1" y2="1"><stop stopColor="#0f86dd" /><stop offset=".5" stopColor="#4d64c0" /><stop offset="1" stopColor="#a052a8" /></linearGradient></defs>
            <rect width="26" height="26" rx="3" fill="url(#ph)" />
            <path d="M0 22 11 10q2-2 4 0l11 11v2q0 3-3 3H3q-3 0-3-4z" fill="#2f9de8" />
            <path d="M0 21 10.500 10q2.500-2 4.500 0l3 3L6 26H3q-3 0-3-4z" fill="#4ed0fa" />
            <circle cx="19.500" cy="4.500" r="2.500" fill="#fff" />
          </svg>
        </TaskApp>
      </div>
      <div className="ml-auto flex items-center text-[#f4f6f7]">
        <svg width="16" height="9" viewBox="0 0 16 9" fill="none" stroke="#fff" strokeWidth="1.400"><path d="M.5 8.500 8 1l7.500 7.500" /></svg>
        <svg className="ml-[15px] mt-[4px]" width="16" height="16" viewBox="0 0 16 16" fill="none" stroke="#fff" strokeWidth="1.300">
          <path d="M.6 15.500A15 15 0 0 1 15.500.7" opacity=".5" />
          <path d="M4 15.500A11.500 11.500 0 0 1 15.500 4.600M7.500 15.500a8 8 0 0 1 8-7.200M10.500 15a5 5 0 0 1 5-3.700" />
          <circle cx="14" cy="14" r="1.600" fill="#fff" stroke="none" />
        </svg>
        <svg className="ml-[12px]" width="20" height="18" viewBox="0 0 20 18" fill="none" stroke="#fff" strokeWidth="1.300">
          <path d="M.7 6H3l4.500-4v14L3 12H.7z" />
          <path d="M10 6.500q2 2.500 0 5" />
          <path d="M13 4q4 5 0 10M16 1q6 8 0 16" opacity=".5" />
        </svg>
        <span className="ml-[9px] w-[18px] text-center font-['Open_Sans',sans-serif] text-[24px] leading-none text-white">A</span>
        <div className={`ml-[12px] flex w-[79px] flex-col items-center text-[14.600px] leading-[23px] tracking-[-0.1px] ${KR}`}>
          <span className="whitespace-nowrap">오후 12:58</span>
          <span className="whitespace-nowrap">2024-02-15</span>
        </div>
        <svg className="ml-[21px] mt-[9px]" width="31" height="31" viewBox="0 0 31 31">
          <path d="M0 0h20v17H12l-4 4v-4H0z" fill="#fff" />
          <path d="M4 4.500h12M4 8.500h12M4 12.500h8" stroke="#293b45" strokeWidth="1.300" />
          <circle cx="19.500" cy="20" r="10" fill="#2f3437" stroke="#8a9499" />
          <text x="19.500" y="25" textAnchor="middle" fontSize="14" fontWeight="700" fill="#fff" className={UI}>1</text>
        </svg>
        <div className="ml-[14px] mr-[5px] h-[50px] w-px bg-[#7d8990]" />
      </div>
    </div>
  );
}

export default function App() {
  return (
    <div className="flex h-[1080px] w-[1920px] flex-col overflow-hidden bg-white">
      <TabStrip />
      <Toolbar />
      <Page />
      <Taskbar />
    </div>
  );
}
